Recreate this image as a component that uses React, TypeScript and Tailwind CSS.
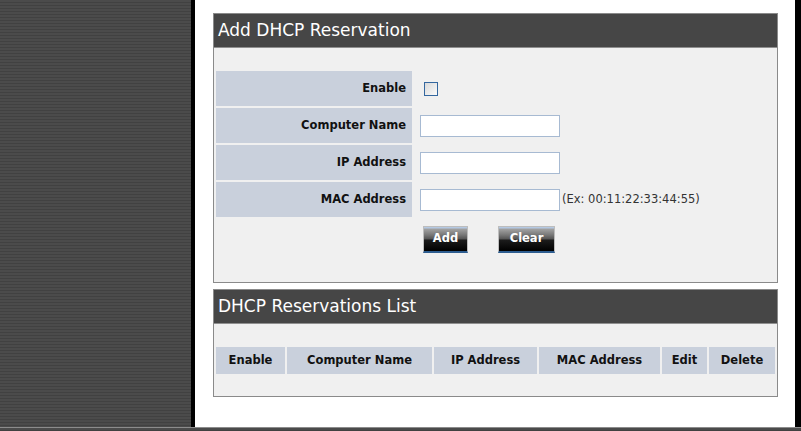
import React from 'react';

const stripes =
    'bg-[image:repeating-linear-gradient(to_bottom,#4b4b4b_0px,#4b4b4b_2px,#414141_2px,#414141_3px)]';

const formRows = [
    { label: 'Enable', kind: 'checkbox' },
    { label: 'Computer Name', kind: 'input' },
    { label: 'IP Address', kind: 'input' },
    { label: 'MAC Address', kind: 'input', hint: '(Ex: 00:11:22:33:44:55)' },
];

const listColumns = [
    { title: 'Enable', width: 'w-[69px]' },
    { title: 'Computer Name', width: 'w-[145px]' },
    { title: 'IP Address', width: 'w-[103px]' },
    { title: 'MAC Address', width: 'w-[121px]' },
    { title: 'Edit', width: 'w-[45px]' },
    { title: 'Delete', width: 'w-[66px]' },
];

const PanelHeader: React.FC<{ title: string }> = ({ title }) => (
    <div className="h-[34px] bg-[#464646] border-b border-[#8f8f8f] flex items-center pl-[4px] text-white text-[17px] leading-none">
        {title}
    </div>
);

const DarkButton: React.FC<{ label: string; width: string }> = ({ label, width }) => (
    <button
        type="button"
        className={`${width} h-[27px] border border-[#bdbdbd] border-b-[2px] border-b-[#2d5d90] bg-[linear-gradient(to_bottom,#b4c8e2_0px,#b4c8e2_1px,#a2a2a2_2px,#777777_8px,#545454_12px,#1c1c1c_13px,#000000_100%)] text-white font-bold text-[11.5px] leading-none flex items-center justify-center`}
    >
        {label}
    </button>
);

export default function App() {
    return (
        <div className="w-[801px] h-[431px] flex flex-col overflow-hidden font-['DejaVu_Sans',sans-serif] bg-white">
            <div className="flex h-[427px]">
                <div className={`w-[191px] ${stripes}`} />
                <div className="w-[4px] bg-black" />
                <div className="w-[600px] bg-white pl-[18px] pt-[13px]">
                    {/* Add DHCP Reservation */}
                    <div className="w-[565px] border border-[#8a8a8a] bg-[#f0f0f0]">
                        <PanelHeader title="Add DHCP Reservation" />
                        <div className="px-[2px] pt-[23px] pb-[29px]">
                            <div className="flex flex-col gap-[2px]">
                                {formRows.map((row) => (
                                    <div key={row.label} className="flex h-[35px]">
                                        <div className="w-[196px] bg-[#c9d0dc] flex items-center justify-end pr-[6px] text-[11.5px] font-bold text-[#111]">
                                            {row.label}
                                        </div>
                                        <div className="flex-1 flex items-center pl-[8px] gap-[2px]">
                                            {row.kind === 'checkbox' ? (
                                                <div className="ml-[4px] w-[14px] h-[14px] border-[1.5px] border-[#34679f] bg-[linear-gradient(135deg,#d9d9d9,#fbfbfb)]" />
                                            ) : (
                                                <div className="w-[140px] h-[22px] bg-white border border-[#a7bad2]" />
                                            )}
                                            {row.hint && (
                                                <span className="text-[11.5px] text-[#333]">{row.hint}</span>
                                            )}
                                        </div>
                                    </div>
                                ))}
                            </div>
                            <div className="flex gap-[30px] pl-[207px] mt-[9px]">
                                <DarkButton label="Add" width="w-[45px]" />
                                <DarkButton label="Clear" width="w-[57px]" />
                            </div>
                        </div>
                    </div>

                    {/* DHCP Reservations List */}
                    <div className="w-[565px] mt-[6px] border border-[#8a8a8a] bg-[#f0f0f0]">
                        <PanelHeader title="DHCP Reservations List" />
                        <div className="px-[2px] pt-[23px] pb-[22px]">
                            <div className="flex gap-[2px]">
                                {listColumns.map((col) => (
                                    <div
                                        key={col.title}
                                        className={`${col.width} h-[27px] bg-[#c9d0dc] flex items-center justify-center text-[11.5px] font-bold text-[#111]`}
                                    >
                                        {col.title}
                                    </div>
                                ))}
                            </div>
                        </div>
                    </div>
                </div>
                <div className="w-[6px] bg-black" />
            </div>
            <div className={`h-[4px] border-t border-[#8c8c8c] ${stripes}`} />
        </div>
    );
}
